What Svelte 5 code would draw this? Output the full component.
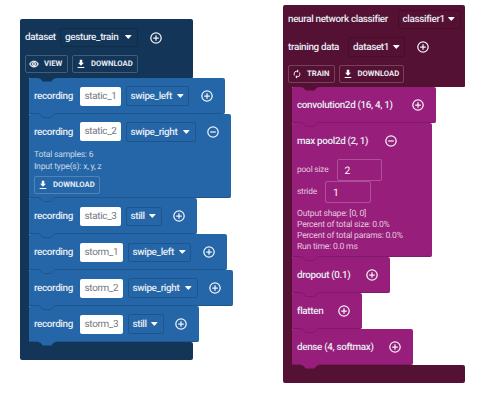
<script>
  const recordings = [
    { name: 'static_1', nw: 41, label: 'swipe_left', lw: 63.5, w: 196 },
    { name: 'static_2', nw: 41, label: 'swipe_right', lw: 70, w: 202, open: true },
    { name: 'static_3', nw: 41, label: 'still', lw: 36, w: 168 },
    { name: 'storm_1', nw: 43, label: 'swipe_left', lw: 63.5, w: 198 },
    { name: 'storm_2', nw: 43, label: 'swipe_right', lw: 70, w: 204 },
    { name: 'storm_3', nw: 43, label: 'still', lw: 36, w: 170 },
  ];
  const layers = [
    { title: 'convolution2d (16, 4, 1)', w: 143.5 },
    { title: 'max pool2d (2, 1)', w: 139.5, iw: 111.5, open: true },
    { title: 'dropout (0.1)', w: 98 },
    { title: 'flatten', w: 69.5 },
    { title: 'dense (4, softmax)', w: 120.5 },
  ];
</script>

{#snippet toggle(open)}
  <svg class="toggle" viewBox="0 0 12 12">
    <circle cx="6" cy="6" r="5.2" />
    <path d={open ? 'M3.2 6h5.6' : 'M3.2 6h5.6M6 3.2v5.6'} />
  </svg>
{/snippet}

{#snippet dropdown(text, width)}
  <div class="dropdown" style:width="{width}px">
    <span>{text}</span>
    <svg class="caret" viewBox="0 0 6 4"><path d="M.5 0h5q.7 0 .2.6L3.4 3.3q-.4.4-.8 0L.3.6Q-.2 0 .5 0z" /></svg>
  </div>
{/snippet}

{#snippet button(icon, text, width)}
  <div class="button" style:width="{width}px">
    <svg class="icon" viewBox="0 0 24 24">
      {#if icon === 'view'}
        <path d="M12 6.5c3.79 0 7.17 2.13 8.82 5.5-1.65 3.37-5.02 5.5-8.82 5.5S4.83 15.37 3.18 12C4.83 8.63 8.21 6.5 12 6.5m0-2C7 4.5 2.73 7.61 1 12c1.73 4.39 6 7.5 11 7.5s9.27-3.11 11-7.5c-1.73-4.39-6-7.5-11-7.5zm0 5a2.5 2.5 0 0 1 0 5 2.5 2.5 0 0 1 0-5m0-2c-2.48 0-4.5 2.02-4.5 4.5s2.02 4.5 4.5 4.5 4.5-2.02 4.5-4.5-2.02-4.5-4.5-4.5z" stroke="white" stroke-width="1" />
      {:else if icon === 'train'}
        <path d="M12 6v3l4-4-4-4v3c-4.42 0-8 3.58-8 8 0 1.57.46 3.03 1.24 4.26L6.7 14.8A5.87 5.87 0 0 1 6 12c0-3.31 2.69-6 6-6zm6.76 1.74L17.3 9.2c.44.84.7 1.79.7 2.8 0 3.31-2.69 6-6 6v-3l-4 4 4 4v-3c4.42 0 8-3.58 8-8 0-1.57-.46-3.03-1.24-4.26z" />
      {:else}
        <path d="M19 9h-4V2H9v7H5l7 7 7-7zM4 19v2.5h16V19H4z" />
      {/if}
    </svg>
    <span>{text}</span>
  </div>
{/snippet}

{#snippet notch(kind)}
  <svg class="notch {kind}" viewBox="0 0 20 6">
    <path class="gap" d="M1.5 0h17v1.5h-17z" />
    <path d="M0 .5h1.5q.7 0 1.2.5l2.6 3q.5.5 1.2.5h7q.7 0 1.2-.5l2.6-3q.5-.5 1.2-.5H20" />
  </svg>
{/snippet}

<main>
  <section class="stack blue">
    <header>
      <div class="line">
        <span style:width="35px">dataset</span>
        {@render dropdown('gesture_train', 77.5)}
        {@render toggle(false)}
      </div>
      <div class="buttons">
        {@render button('view', 'VIEW', 43)}
        {@render button('download', 'DOWNLOAD', 65.5)}
      </div>
    </header>
    <div class="children">
      {#each recordings as r, i}
        <article class:open={r.open} style:width="{r.w}px">
          {@render notch(i ? 'seam' : 'first')}
          <div class="row">
            <span style:width="46px">recording</span>
            <div class="field" style:width="{r.nw}px">{r.name}</div>
            {@render dropdown(r.label, r.lw)}
            {@render toggle(r.open)}
          </div>
          {#if r.open}
            <div class="info">Total samples: 6<br />Input type(s): x, y, z</div>
            {@render button('download', 'DOWNLOAD', 65.5)}
          {/if}
          {#if i === recordings.length - 1}{@render notch('tab')}{/if}
        </article>
      {/each}
    </div>
    <footer></footer>
  </section>

  <section class="stack purple">
    <header>
      <div class="line first-line">
        <span style:width="109.5px">neural network classifier</span>
        {@render dropdown('classifier1', 63)}
      </div>
      <div class="line">
        <span style:width="60px">training data</span>
        {@render dropdown('dataset1', 57)}
        {@render toggle(false)}
      </div>
      <div class="buttons">
        {@render button('train', 'TRAIN', 46.5)}
        {@render button('download', 'DOWNLOAD', 65.5)}
      </div>
    </header>
    <div class="children">
      {#each layers as l, i}
        <article class:open={l.open} style:width="{l.w}px">
          {@render notch(i ? 'seam' : 'first')}
          <div class="row split" style:width={l.iw ? `${l.iw}px` : '100%'}>
            <span>{l.title}</span>
            {@render toggle(l.open)}
          </div>
          {#if l.open}
            <div class="param"><span>pool size</span><div class="box">2</div></div>
            <div class="param"><span>stride</span><div class="box">1</div></div>
            <div class="info">Output shape: [0, 0]<br />Percent of total size: 0.0%<br />Percent of total params: 0.0%<br />Run time: 0.0 ms</div>
          {/if}
          {#if i === layers.length - 1}{@render notch('tab')}{/if}
        </article>
      {/each}
    </div>
    <footer></footer>
  </section>
</main>

<style>
  :global(body) { background: #fff; }
  main {
    display: flex;
    align-items: flex-start;
    gap: 90px;
    width: 492px;
    height: 400px;
    box-sizing: border-box;
    padding: 5px 0 0 20px;
    font: 500 9.9px/12px Roboto, sans-serif;
    letter-spacing: -.34px;
    text-rendering: geometricPrecision;
    color: #e8ecf3;
    white-space: nowrap;
    overflow: hidden;
  }
  main * { box-sizing: border-box; }
  svg { display: block; flex: none; }
  .blue { --outer: #133557; --inner: #2466a8; --seam: #1e568e; width: 173px; margin-top: 14px; }
  .purple { --outer: #551133; --inner: #981e7b; --seam: #811969; width: 182px; }
  header { background: var(--outer); border-radius: 2px 2px 1px 0; padding: 9px 0 0 5px; height: 59px; }
  .purple header { height: 82px; padding-top: 5px; }
  .line { display: flex; align-items: center; height: 19px; }
  .first-line { margin-bottom: 8.5px; }
  .line span, .row span { flex: none; padding-top: 1px; }
  .dropdown {
    display: flex;
    align-items: center;
    justify-content: space-between;
    flex: none;
    height: 19.5px;
    padding: 0 4.5px 0 4px;
    border: 1px solid rgba(0, 0, 0, .16);
    border-radius: 2px;
  }
  .caret { width: 6.6px; height: 4.4px; fill: #fff; }
  .toggle { width: 12px; height: 12px; margin-left: 11.5px; fill: none; stroke: #f4f4fa; stroke-width: 1.25; }
  .line .toggle { margin-left: 12px; }
  .buttons { display: flex; gap: 4px; margin-top: 8px; }
  .purple .buttons { margin-top: 8.5px; }
  .button {
    display: flex;
    align-items: center;
    flex: none;
    height: 18px;
    padding-left: 3px;
    gap: 5px;
    border: 1px solid rgba(255, 255, 255, .2);
    border-radius: 2px;
    font-size: 7.7px;
    font-weight: 700;
    letter-spacing: 0;
  }
  .icon { width: 10px; height: 10px; fill: #fff; }
  .children { background: var(--outer); width: 9px; padding-left: 9px; }
  article { position: relative; background: var(--inner); height: 35.9px; padding-left: 5px; border-radius: 1px 2px 2px 0; border-bottom: 1px solid var(--seam); }
  .blue .open { height: 84.5px; }
  .purple .open { height: 134.5px; }
  .row { display: flex; align-items: center; height: 36px; }
  .row span { padding-top: 1.5px; }
  .field { display: flex; align-items: center; flex: none; height: 19px; margin-right: 4.5px; padding: 1px 0 0 4.5px; background: #fff; border-radius: 2px; color: #74777f; font-weight: 400; letter-spacing: -.3px; }
  .split { justify-content: space-between; padding-right: 12px; }
  .info { font-size: 8.6px; font-weight: 400; line-height: 11.2px; letter-spacing: -.22px; color: rgba(255, 255, 255, .76); }
  .blue .info { margin: .5px 0 3.5px; }
  .purple .info { margin-top: 5.5px; }
  .param { display: flex; align-items: center; gap: 8px; height: 22.2px; color: rgba(255, 255, 255, .76); font-size: 8.4px; font-weight: 400; }
  .param span { width: 31.5px; letter-spacing: -.2px; }
  .param + .param span { width: 20px; }
  .box { width: 45.5px; height: 22.5px; border: 1px solid rgba(255, 255, 255, .22); border-radius: 2px; padding-left: 7px; font-size: 10.3px; line-height: 22px; color: #fff; }
  .notch { position: absolute; left: 8px; top: 0; width: 20px; height: 6px; fill: var(--inner); stroke: var(--seam); stroke-width: 1; }
  .gap { stroke: none; }
  .seam { top: -1px; }
  .first { fill: var(--outer); stroke: none; top: -1px; }
  .tab { top: auto; bottom: -6px; stroke: none; }
  footer { background: var(--outer); height: 18px; border-radius: 0 2px 2px 2px; }
</style>
